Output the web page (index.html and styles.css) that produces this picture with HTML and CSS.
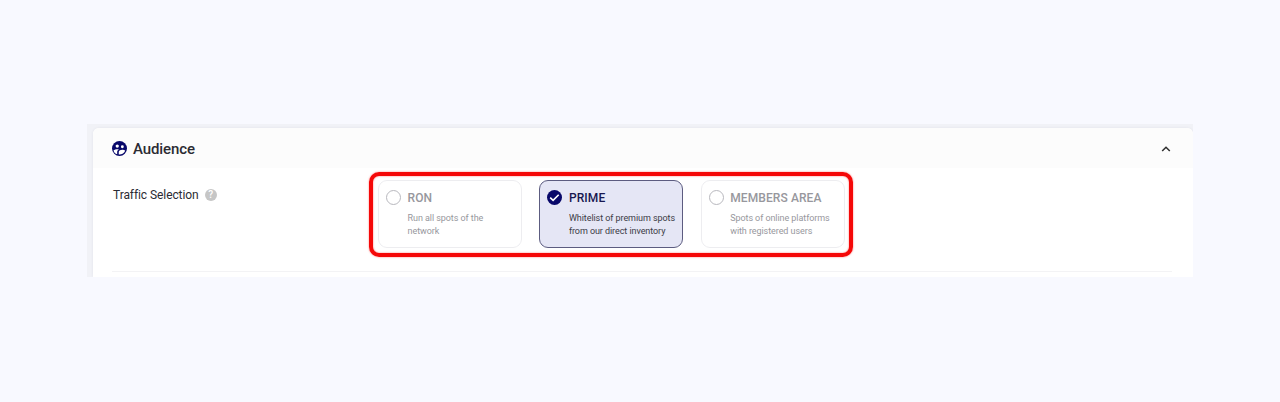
FILE: index.html
```
<!DOCTYPE html>
<html lang="en">
<head>
    <meta charset="UTF-8">
    <meta name="viewport" content="width=device-width, initial-scale=1.0">
    <title>Audience</title>
    <link rel="stylesheet" href="styles.css">
</head>
<body>
    <div class="frame">
        <section class="panel">
            <header class="panel-header">
                <svg class="panel-icon" viewBox="2 2 20 20">
                    <circle cx="12" cy="12" r="10" fill="#08086a"/>
                    <circle cx="9" cy="8.8" r="2.2" fill="#fff"/>
                    <circle cx="15.8" cy="9.6" r="1.9" fill="#fff"/>
                    <path d="M4 14.6c1.3-1.2 3.2-1.7 5-1.7 .8 0 1.5.1 2.2.3-1.5.8-2.3 2-2.3 3.3v3.2C6.4 19 4.6 17.2 4 14.6z" fill="#fff"/>
                    <path d="M11 20v-3.300c0-1.900 2.600-3 4.600-3 1.500 0 3.100.5 4 1.300-1.200 3.200-4.600 5.300-8.600 5z" fill="#fff"/>
                </svg>
                <h1>Audience</h1>
                <svg class="chevron" viewBox="0 0 10 6">
                    <path d="M1.2 5L5 1.3 8.8 5" fill="none" stroke="#333" stroke-width="1.6"/>
                </svg>
            </header>
            <div class="row">
                <div class="label">
                    <span>Traffic Selection</span>
                    <span class="help">?</span>
                </div>
                <div class="options">
                    <div class="option">
                        <span class="radio"></span>
                        <div class="option-text">
                            <h2>RON</h2>
                            <p>Run all spots of the<br>network</p>
                        </div>
                    </div>
                    <div class="option selected">
                        <svg class="check" viewBox="0 0 15 15">
                            <circle cx="7.5" cy="7.5" r="7.5" fill="#08086a"/>
                            <path d="M3.2 7.6l2.9 2.7 5.6-5.6" fill="none" stroke="#fff" stroke-width="1.6"/>
                        </svg>
                        <div class="option-text">
                            <h2>PRIME</h2>
                            <p>Whitelist of premium spots<br>from our direct inventory</p>
                        </div>
                    </div>
                    <div class="option">
                        <span class="radio"></span>
                        <div class="option-text">
                            <h2>MEMBERS AREA</h2>
                            <p>Spots of online platforms<br>with registered users</p>
                        </div>
                    </div>
                </div>
            </div>
            <hr>
        </section>
    </div>
</body>
</html>
```

FILE: styles.css
```
* {
    box-sizing: border-box;
}

body {
    margin: 0;
    height: 402px;
    padding: 124px 87px 0;
    background: #f8f9ff;
    font-family: Roboto, sans-serif;
    color: #2b2b33;
}

.frame {
    height: 153px;
    padding: 4px 0 0 6px;
    background: #f1f2f7;
    overflow: hidden;
}

.panel {
    height: 149px;
    background: #fff;
    border-radius: 6px 6px 0 0;
    box-shadow: 0 0 3px rgba(60, 60, 90, 0.08);
    overflow: hidden;
}

.panel-header {
    display: flex;
    align-items: center;
    height: 40px;
    padding: 1px 22px 0 18.5px;
    background: #fcfcfc;
}

.panel-icon {
    width: 15px;
    height: 15px;
}

.panel-header h1 {
    margin: 0 0 0 6.5px;
    font-size: 15px;
    font-weight: 500;
    line-height: 20px;
    letter-spacing: -0.1px;
}

.chevron {
    width: 10px;
    height: 6px;
    margin-left: auto;
}

.row {
    display: flex;
    height: 103px;
    padding: 4px 0 0 20px;
}

.label {
    display: flex;
    align-items: center;
    width: 256px;
    height: 14px;
    margin-top: 16px;
    font-size: 12px;
    letter-spacing: -0.08px;
}

.help {
    width: 12px;
    height: 12px;
    margin-left: 6px;
    border-radius: 50%;
    background: #c6c6c6;
    color: #fff;
    font-size: 10px;
    font-weight: 500;
    line-height: 12px;
    text-align: center;
}

.options {
    display: grid;
    grid-template-columns: repeat(3, 144px);
    gap: 17.3px;
    width: 484px;
    height: 85px;
    padding: 4px 0 0 5px;
    border: 4px solid #f50808;
    border-radius: 10px;
    box-shadow: 0 0 2px rgba(255, 0, 0, 0.55), inset 0 0 2px rgba(255, 0, 0, 0.55);
}

.option {
    display: flex;
    height: 68px;
    padding: 9px 0 0 7px;
    border: 1px solid #ededf0;
    border-radius: 9px;
    color: #97979d;
}

.option.selected {
    background: #e5e6f5;
    border-color: #5c5c80;
    color: #3b3b46;
}

.radio,
.check {
    flex: none;
    width: 15px;
    height: 15px;
}

.radio {
    border: 1px solid #b8b8be;
    border-radius: 50%;
}

.option-text {
    margin-left: 6.6px;
}

.option h2 {
    margin: 1px 0 6px;
    font-size: 12px;
    font-weight: 500;
    line-height: 15px;
    letter-spacing: 0.1px;
    white-space: nowrap;
}

.selected h2 {
    color: #171750;
}

.option p {
    margin: 0;
    font-size: 9px;
    line-height: 13px;
    letter-spacing: -0.07px;
    white-space: nowrap;
}

hr {
    height: 1px;
    margin: 0 21px 0 19px;
    border: 0;
    background: #f3f3f5;
}
```
